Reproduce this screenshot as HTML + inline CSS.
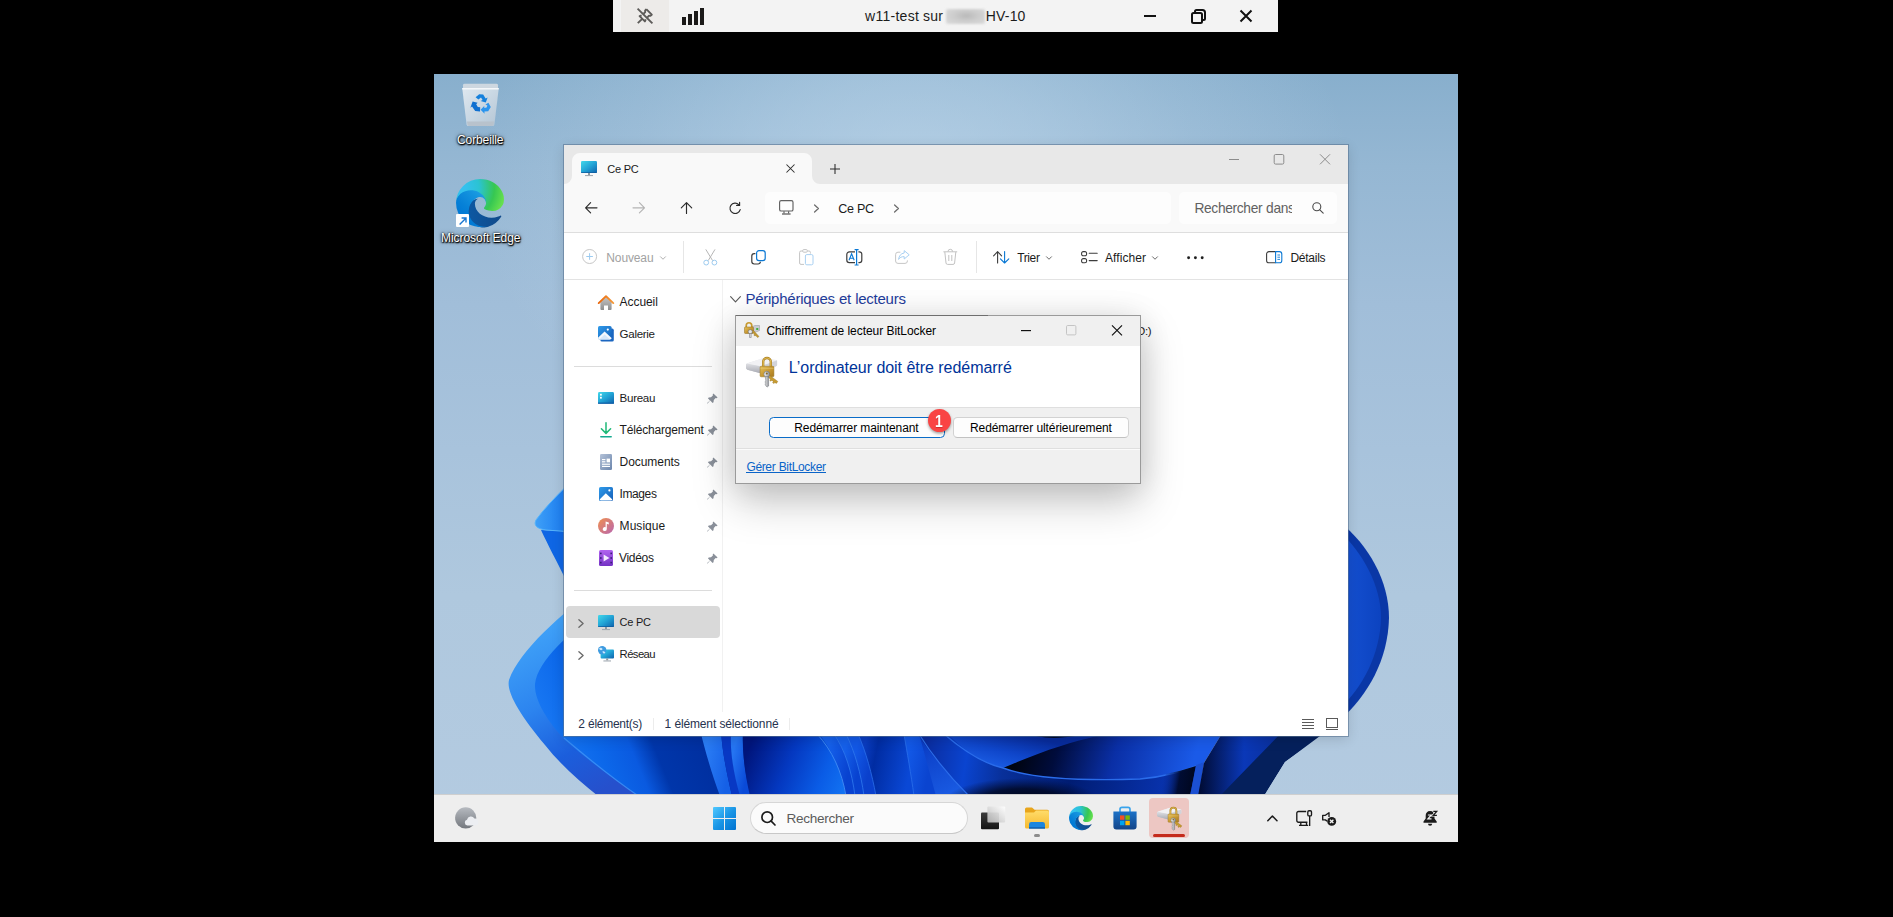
<!DOCTYPE html>
<html lang="fr">
<head>
<meta charset="utf-8">
<title>w11-test</title>
<style>
*{box-sizing:border-box;margin:0;padding:0}
html,body{width:1893px;height:917px;overflow:hidden;background:#000}
body{position:relative;font-family:"Liberation Sans",sans-serif;font-size:12px;color:#1a1a1a}
.abs{position:absolute}
.t{position:absolute;white-space:nowrap;line-height:1}
svg{position:absolute;overflow:visible}
#cbar{left:613px;top:0;width:665px;height:32px;background:#f3f3f3}
#cbar .pin{left:8px;top:0;width:48px;height:32px;background:#edebe9}
#desk{left:434px;top:74px;width:1024px;height:768px;overflow:hidden;background:radial-gradient(ellipse 440px 300px at 480px 110px,rgba(200,222,240,.62) 0%,rgba(200,222,240,.42) 35%,rgba(200,222,240,.2) 65%,rgba(200,222,240,0) 100%),linear-gradient(180deg,rgb(136,175,205) 0%,rgb(149,183,211) 12%,rgb(161,190,217) 30%,rgb(168,195,220) 49%,rgb(175,200,222) 68%,rgb(180,203,225) 100%)}
#in{left:-434px;top:-74px;width:1893px;height:917px}
#in svg#wall{left:434px;top:74px}
.sh{text-shadow:0 1px 2px rgba(0,0,0,.95),0 0 3px rgba(0,0,0,.7),1px 1px 1px rgba(0,0,0,.8)}
/* explorer */
#exp{left:564px;top:145px;width:784px;height:591px;background:#fff;box-shadow:0 0 0 1px rgba(90,116,146,.6),0 3px 12px rgba(0,0,0,.14)}
/* dialog */
#dlg{left:735px;top:315px;width:406px;height:169px;background:#f0f0f0;border:1px solid #9a9a9a;box-shadow:0 18px 40px rgba(0,0,0,.21),0 3px 30px rgba(0,0,0,.11)}
#taskbar{left:434px;top:794px;width:1024px;height:48px;background:#eeeeee;border-top:1px solid #cfcfcf}

</style>
</head>
<body>
<div id="cbar" class="abs">
  <div class="pin abs"></div>
  <svg style="left:24px;top:8px" width="16" height="16" viewBox="0 0 16 16" fill="none" stroke="#5d5b59" stroke-width="1.9" stroke-linecap="butt" stroke-linejoin="round">
    <path d="M0.6 0.6 L15.4 15.4"/>
    <path d="M9.3 1.2 L14.8 6.7 L13.2 7.9 L12 7.7 L10.2 9.6"/>
    <path d="M6.5 5.8 L8.2 4 L8.1 2.6 L9.3 1.2"/>
    <path d="M4.6 7.3 L2.6 8.1 L7.9 13.4 L8.8 11.4"/>
    <path d="M5.2 10.8 L0.8 15.2"/>
  </svg>
  <svg style="left:69px;top:8px" width="22" height="17" viewBox="0 0 22 17" fill="#1b1a19">
    <rect x="0" y="9" width="4" height="8"/><rect x="6" y="6" width="4" height="11"/><rect x="12" y="3" width="4" height="14"/><rect x="18" y="0" width="4" height="17"/>
  </svg>
  <div class="abs" style="left:333px;top:9px;width:39px;height:15px;background:radial-gradient(ellipse at 52% 45%,#b9b9b9 0%,#cdcdcd 45%,#dcdcdc 100%);border-radius:2px;filter:blur(1.1px)"></div>
  <svg style="left:531px;top:8px" width="110" height="16" viewBox="0 0 110 16" fill="none" stroke="#111" stroke-width="2">
    <path d="M0 8 H12"/>
    <rect x="48" y="5" width="10" height="10" rx="1.5"/>
    <path d="M51 4.6 V3.5 A1.5 1.5 0 0 1 52.5 2 H58.5 A2.5 2.5 0 0 1 61 4.5 V10.5 A1.5 1.5 0 0 1 59.5 12 H58.4"/>
    <path d="M96.5 2.5 L107.5 13.5 M107.5 2.5 L96.5 13.5"/>
  </svg>
</div>


<span class="t" id="t0" style="left:865.00px;top:8.70px;font-size:14px;color:#1c1c1c;letter-spacing:0.278px;word-spacing:-0.278px;">w11-test sur</span>
<span class="t" id="t1" style="left:985.80px;top:8.70px;font-size:14px;color:#1c1c1c;letter-spacing:0.170px;word-spacing:-0.170px;">HV-10</span>
<div id="desk" class="abs"><div id="in" class="abs">
<svg id="wall" style="left:434px;top:74px" width="1024" height="768" viewBox="434 74 1024 768">
  <defs>
    <linearGradient id="wg1" x1="0" y1="0" x2="1" y2="0"><stop offset="0" stop-color="#3fa0f7"/><stop offset=".45" stop-color="#1c7df0"/><stop offset="1" stop-color="#0a5fe0"/></linearGradient>
    <linearGradient id="wg2" gradientUnits="userSpaceOnUse" x1="515" y1="640" x2="600" y2="792"><stop offset="0" stop-color="#40a2f8"/><stop offset=".4" stop-color="#2c84ef"/><stop offset=".72" stop-color="#1b5edc"/><stop offset="1" stop-color="#2650cc"/></linearGradient>
    <linearGradient id="wg3" gradientUnits="userSpaceOnUse" x1="560" y1="782" x2="705" y2="722"><stop offset="0" stop-color="#1a7af4"/><stop offset=".3" stop-color="#0c68ea"/><stop offset=".5" stop-color="#0a5ae0"/><stop offset=".64" stop-color="#0036aa"/><stop offset="1" stop-color="#002e9e"/></linearGradient>
    <linearGradient id="wg4" gradientUnits="userSpaceOnUse" x1="748" y1="750" x2="845" y2="790"><stop offset="0" stop-color="#00157c"/><stop offset=".4" stop-color="#0438c0"/><stop offset=".75" stop-color="#0a5ce6"/><stop offset="1" stop-color="#1272f2"/></linearGradient>
    <linearGradient id="wg5" gradientUnits="userSpaceOnUse" x1="862" y1="760" x2="910" y2="770"><stop offset="0" stop-color="#0a3cc0"/><stop offset=".25" stop-color="#002ca2"/><stop offset="1" stop-color="#0a48d6"/></linearGradient>
    <linearGradient id="wg6" gradientUnits="userSpaceOnUse" x1="1010" y1="732" x2="1000" y2="772"><stop offset="0" stop-color="#082c9c"/><stop offset=".5" stop-color="#0f46ca"/><stop offset="1" stop-color="#1c60e8"/></linearGradient>
    <linearGradient id="wg7" x1="0" y1="0" x2="1" y2=".35"><stop offset="0" stop-color="#000618"/><stop offset=".35" stop-color="#001a70"/><stop offset="1" stop-color="#0a44cc"/></linearGradient>
    <linearGradient id="wg8" x1="0" y1="0" x2="1" y2="0"><stop offset="0" stop-color="#000a30"/><stop offset=".5" stop-color="#0a38b8"/><stop offset="1" stop-color="#0a2c90"/></linearGradient>
    <linearGradient id="wg9" x1="0" y1="0" x2="0" y2="1"><stop offset="0" stop-color="#0a36b8"/><stop offset=".6" stop-color="#1555e0"/><stop offset="1" stop-color="#1a5eea"/></linearGradient>
    <linearGradient id="wgB" gradientUnits="userSpaceOnUse" x1="1020" y1="742" x2="1185" y2="790"><stop offset="0" stop-color="#00040f"/><stop offset=".22" stop-color="#000c3c"/><stop offset=".55" stop-color="#0a2fa6"/><stop offset="1" stop-color="#1a5ae8"/></linearGradient>
    <linearGradient id="wn1" gradientUnits="userSpaceOnUse" x1="704" y1="760" x2="730" y2="765"><stop offset="0" stop-color="#2a7cf4"/><stop offset="1" stop-color="#1560e6"/></linearGradient>
    <linearGradient id="wn2" gradientUnits="userSpaceOnUse" x1="731" y1="760" x2="750" y2="765"><stop offset="0" stop-color="#2575f2"/><stop offset="1" stop-color="#0a4ad8"/></linearGradient>
    <linearGradient id="wf1" gradientUnits="userSpaceOnUse" x1="826" y1="760" x2="850" y2="766"><stop offset="0" stop-color="#1560ea"/><stop offset="1" stop-color="#0842d0"/></linearGradient>
    <linearGradient id="wf2" gradientUnits="userSpaceOnUse" x1="842" y1="760" x2="860" y2="765"><stop offset="0" stop-color="#1560ea"/><stop offset="1" stop-color="#0842d0"/></linearGradient>
    <linearGradient id="wf3" gradientUnits="userSpaceOnUse" x1="853" y1="760" x2="871" y2="765"><stop offset="0" stop-color="#1258e6"/><stop offset="1" stop-color="#0a40cc"/></linearGradient>
    <linearGradient id="wf5" gradientUnits="userSpaceOnUse" x1="907" y1="760" x2="930" y2="765"><stop offset="0" stop-color="#1258e6"/><stop offset="1" stop-color="#0a44d0"/></linearGradient>
    <radialGradient id="wgS"><stop offset="0" stop-color="#00030c" stop-opacity=".96"/><stop offset=".55" stop-color="#00061c" stop-opacity=".8"/><stop offset="1" stop-color="#000a30" stop-opacity="0"/></radialGradient>
    <linearGradient id="wgC" gradientUnits="userSpaceOnUse" x1="925" y1="745" x2="1190" y2="790"><stop offset="0" stop-color="#0a2c9e"/><stop offset=".16" stop-color="#0a44d0"/><stop offset=".3" stop-color="#08309a"/><stop offset=".55" stop-color="#001c72"/><stop offset="1" stop-color="#0a38bc"/></linearGradient>
    <linearGradient id="wgD" gradientUnits="userSpaceOnUse" x1="920" y1="740" x2="960" y2="790"><stop offset="0" stop-color="#001e86"/><stop offset="1" stop-color="#0030a8"/></linearGradient>
    <linearGradient id="wgE" gradientUnits="userSpaceOnUse" x1="925" y1="740" x2="955" y2="796"><stop offset="0" stop-color="#0a3cc4"/><stop offset="1" stop-color="#1a5ce4"/></linearGradient>
    <linearGradient id="wgW" gradientUnits="userSpaceOnUse" x1="1160" y1="780" x2="1194" y2="786"><stop offset="0" stop-color="#0a36b8" stop-opacity="0"/><stop offset=".55" stop-color="#000a2c" stop-opacity=".95"/><stop offset="1" stop-color="#00071e"/></linearGradient>
    <linearGradient id="wgR" x1="0" y1="0" x2="1" y2="0"><stop offset="0" stop-color="#1652d4"/><stop offset="1" stop-color="#0c43c0"/></linearGradient>
  </defs>
  <clipPath id="bloomclip"><path d="M500 430 L1400 430 L1400 700 L1348 713 L1322 736 L1285 762 L1264 796 L500 796 Z"/></clipPath>
  <g clip-path="url(#bloomclip)">
  <!-- upper-left petal -->
  <path d="M600 452 C582 472 550 500 536 520 C533 526 538 529 546 530 L600 534 Z" fill="url(#wg1)"/>
  <path d="M541 530 C548 545 556 560 566 580 L600 600 L600 533 Z" fill="#0f66e4"/>
  <path d="M600 452 C582 472 550 500 536 520 C533 526 538 529 546 530 L600 534" fill="none" stroke="#55b4fb" stroke-width="1"/>
  <!-- lower-left big petal: outer band -->
  <path d="M600 585 C560 615 520 650 509 680 C506 692 520 715 545 745 C560 764 580 782 598 796 L1000 796 L1000 700 L600 700 Z" fill="url(#wg2)"/>
  <!-- inner -->
  <path d="M600 612 C570 632 538 660 535 684 C534 700 548 722 566 741 C590 762 615 780 638 796 L760 796 L760 700 L600 700 Z" fill="url(#wg3)"/>
  <path d="M564 738 C590 760 615 780 637 795" fill="none" stroke="#4a98f6" stroke-width="1.2" opacity=".7"/>
  <!-- narrow petals -->
  <path d="M700 730 C705 750 712 775 720 796 L732 796 C726 770 722 750 721 730 Z" fill="url(#wn1)"/>
  <path d="M721 730 C722 750 726 770 732 796 L741 796 C733 770 730 750 731 730 Z" fill="#0838c4"/>
  <path d="M731 734 C730 750 733 772 740 796 L751 796 C745 775 742 752 743 734 Z" fill="url(#wn2)"/>
  <!-- deep region -->
  <path d="M742 730 L830 730 L850 796 L750 796 C745 775 742 752 743 730 Z" fill="url(#wg4)"/>
  <!-- fan of narrow rims -->
  <path d="M816 730 C832 748 842 772 846 796 L1000 796 L1000 730 Z" fill="url(#wf1)"/>
  <path d="M817 734 C832 750 842 772 846 796" fill="none" stroke="#3c86f2" stroke-width="1"/>
  <path d="M833 730 C845 750 852 772 855 796 L1000 796 L1000 730 Z" fill="url(#wf2)"/>
  <path d="M834 734 C845 750 852 772 855 796" fill="none" stroke="#2f78ee" stroke-width=".8"/>
  <path d="M845 730 C855 752 861 774 864 796 L1000 796 L1000 730 Z" fill="url(#wf3)"/>
  <path d="M846 734 C855 752 861 774 864 796" fill="none" stroke="#2f78ee" stroke-width=".8"/>
  <path d="M857 730 C866 752 872 774 876 796 L1000 796 L1000 730 Z" fill="url(#wg5)"/>
  <path d="M858 734 C866 752 872 774 876 796" fill="none" stroke="#2a6fea" stroke-width=".8"/>
  <path d="M903 730 C907 752 911 774 914 796 L1000 796 L1000 730 Z" fill="url(#wf5)"/>
  <path d="M904 734 C907 752 911 774 914 796" fill="none" stroke="#2a6fea" stroke-width=".8"/>
  <!-- wedge r6..rim7 -->
  <path d="M918 730 C924 752 930 774 936 796 L1000 796 L1000 730 Z" fill="url(#wgE)"/>
  <!-- region C -->
  <path d="M916 730 C925 748 940 765 969 796 L1198 796 L1204 763 L1204 730 Z" fill="url(#wgC)"/>
  <ellipse cx="1022" cy="802" rx="78" ry="24" fill="url(#wgS)"/>
  <path d="M919 734 C930 752 945 772 969 796" fill="none" stroke="#2a6cea" stroke-width="1.2"/>
  <!-- petal A -->
  <path d="M944 730 C965 752 985 764 1003 768 L1100 735 L1110 730 Z" fill="url(#wg6)"/>
  <path d="M1036 736 C1050 739 1062 738 1075 736 Z" fill="#000a28"/>
  <!-- petal B -->
  <path d="M1003 768 C1040 752 1070 742 1098 736 L1110 730 L1224 730 L1204 763 C1185 771 1165 777 1140 779 C1080 781 1030 778 1003 768 Z" fill="url(#wgB)"/>
  <path d="M944 734 C965 752 985 764 1003 768 C1030 778 1080 781 1140 779 C1165 777 1185 771 1204 763" fill="none" stroke="#2a6cea" stroke-width="1.4"/>
  <path d="M1196 766 C1186 769 1176 772 1166 774 L1156 796 L1190 796 Z" fill="url(#wgW)"/>
  <path d="M1204 762 L1196 765 L1190 796 L1199 796 Z" fill="#1b50d2"/>
  <path d="M1224 730 L1204 763 L1198 796 L1224 796 L1290 730 Z" fill="url(#wg8)"/>
  <!-- right outer -->
  <path d="M1284 730 L1220 796 L1264 796 L1285 762 L1324 733 L1348 713 L1340 700 Z" fill="#05205c"/>
  <!-- right side petal -->
  <path d="M1340 522 C1368 545 1389 580 1389 618 C1388 660 1368 695 1340 720 Z" fill="#0a37a6"/>
  <path d="M1340 532 C1362 552 1381 585 1381 618 C1380 655 1362 688 1340 708 Z" fill="url(#wgR)"/>
  </g>
</svg>
<!-- recycle bin -->
<svg style="left:461px;top:83px" width="39" height="44" viewBox="0 0 39 44">
  <defs>
    <linearGradient id="gbin" x1="0" y1="0" x2="1" y2="1"><stop offset="0" stop-color="#e2eaf1"/><stop offset=".5" stop-color="#ccd9e4"/><stop offset="1" stop-color="#b6c6d5"/></linearGradient>
  </defs>
  <path d="M2 2.2 Q2 0.8 3.6 0.8 H35.4 Q37 0.8 37 2.2 V5.6 H2 Z" fill="#cdd7e0"/>
  <path d="M1.2 5 H37.8 L33.4 41.4 Q33.2 43 31.6 43 H7.4 Q5.8 43 5.6 41.4 Z" fill="url(#gbin)" opacity=".96"/>
  <path d="M6 38.4 H33 L32.6 41.6 Q32.4 43 31 43 H8 Q6.6 43 6.4 41.6 Z" fill="#b8c2cc"/>
  <path d="M1.2 5 H37.8 L37.6 6.6 H1.4 Z" fill="#f4f7fa"/>
  <g fill="#1580dc">
    <path d="M14.6 14.2 L18.2 11.2 L22.2 11.6 L24.6 15.4 L26.6 14.4 L24.8 19.6 L19.6 18 L21.6 17 L20 14.4 L17.4 16.6 Z"/>
    <path d="M11.6 18.6 L16.6 19.8 L15.2 21.2 L16.8 24 L19.2 24.2 L19 28.4 L14.2 28 L11 23.6 L9.4 24.8 Z" fill="#0f6fd0"/>
    <path d="M27.4 19.8 L29.8 24 L27.2 28.2 L23.4 28.6 L23.6 30.8 L19.6 26.8 L23.2 23 L23.4 25 L25.6 24.6 L26.4 22.4 L24.4 21.6 Z" fill="#2a94ee"/>
  </g>
</svg>
<!-- edge icon 48 -->
<svg style="left:456px;top:179px" width="48" height="48" viewBox="0 0 256 256">
  <defs>
    <linearGradient id="ea" gradientUnits="userSpaceOnUse" x1="58.7" y1="177" x2="237" y2="177"><stop offset="0" stop-color="#0c59a4"/><stop offset="1" stop-color="#114a8b"/></linearGradient>
    <linearGradient id="ec" gradientUnits="userSpaceOnUse" x1="157.3" y1="99.9" x2="46" y2="221.2"><stop offset="0" stop-color="#1b9de2"/><stop offset=".16" stop-color="#1595df"/><stop offset=".67" stop-color="#0680d7"/><stop offset="1" stop-color="#0078d4"/></linearGradient>
    <radialGradient id="ee" gradientUnits="userSpaceOnUse" cx="25.9" cy="47.4" r="235" gradientTransform="matrix(1 0 0 1 0 0)"><stop offset="0" stop-color="#35c1f1"/><stop offset=".11" stop-color="#34c1ed"/><stop offset=".28" stop-color="#2fc2df"/><stop offset=".42" stop-color="#2bc3d2"/><stop offset=".76" stop-color="#36c752"/><stop offset="1" stop-color="#66e04e"/></radialGradient>
    <g id="edgelogo">
      <path d="M235.7 195.5a93.7 93.7 0 0 1-10.6 4.7 101.9 101.9 0 0 1-35.9 6.4c-47.3 0-88.500-32.500-88.500-74.300a31.500 31.500 0 0 1 16.400-27.300c-42.800 1.800-53.800 46.400-53.800 72.500 0 74 68.100 81.400 82.800 81.400 7.900 0 19.800-2.300 27-4.600l1.300-.4a128.300 128.300 0 0 0 66.600-52.800 4 4 0 0 0-5.300-5.600Z" fill="url(#ea)"/>
      <path d="M105.700 241.400a79.200 79.200 0 0 1-22.700-21.300 80.700 80.700 0 0 1 29.500-120c3.200-1.500 8.500-4.100 15.600-4a32.400 32.400 0 0 1 25.700 13 31.900 31.900 0 0 1 6.300 18.700c0-.2 24.500-79.600-80-79.600-43.900 0-80 41.600-80 78.200a130.200 130.200 0 0 0 12.100 56 128 128 0 0 0 156.400 67 75.500 75.500 0 0 1-62.800-8Z" fill="url(#ec)"/>
      <path d="M152.300 148.900c-.9 1-3.400 2.500-3.400 5.600 0 2.600 1.700 5.200 4.800 7.300 14.300 10 41.400 8.600 41.500 8.600a59.600 59.600 0 0 0 30.300-8.300 61.400 61.400 0 0 0 30.400-52.900c.3-22.400-8-37.300-11.300-43.900C223.500 23.900 177.700 0 128 0A128 128 0 0 0 0 126.200c.5-36.500 36.800-66 80-66 3.500 0 23.500.3 42 10a72.600 72.600 0 0 1 30.900 29.300c6.100 10.600 7.200 24.100 7.200 29.500 0 5.300-2.700 13.300-7.800 19.900Z" fill="url(#ee)"/>
    </g>
  </defs>
  <use href="#edgelogo"/>
</svg>
<!-- shortcut overlay -->
<div class="abs" style="left:456px;top:214px;width:13px;height:13px;background:#fff;border-radius:1px"></div>
<svg style="left:458.5px;top:216.5px" width="8" height="8" viewBox="0 0 8 8" fill="none" stroke="#1a78d2" stroke-width="1.4"><path d="M0.6 7.4 L6.6 1.4 M2.6 1 H7 V5.4"/></svg>

<span class="t" id="t2" style="left:457.00px;top:134.00px;font-size:12px;color:#fff;letter-spacing:-0.107px;word-spacing:0.107px;text-shadow:0 0 2px rgba(0,0,0,.9),0 1px 2px rgba(0,0,0,1),1px 1px 1px rgba(0,0,0,.9),0 0 4px rgba(0,0,0,.5)">Corbeille</span>
<span class="t" id="t3" style="left:441.00px;top:232.00px;font-size:12px;color:#fff;letter-spacing:-0.046px;word-spacing:0.046px;text-shadow:0 0 2px rgba(0,0,0,.9),0 1px 2px rgba(0,0,0,1),1px 1px 1px rgba(0,0,0,.9),0 0 4px rgba(0,0,0,.5)">Microsoft Edge</span>
<svg width="0" height="0" style="left:0;top:0">
  <defs>
    <linearGradient id="gpc" x1="0" y1="0" x2="1" y2="1"><stop offset="0" stop-color="#42d8ea"/><stop offset=".5" stop-color="#22a4d6"/><stop offset="1" stop-color="#0f62ac"/></linearGradient>
    <linearGradient id="ggray" x1="0" y1="0" x2="0" y2="1"><stop offset="0" stop-color="#c4c4c4"/><stop offset="1" stop-color="#8e8e8e"/></linearGradient>
    <linearGradient id="groof" x1="0" y1="0" x2="1" y2="0"><stop offset="0" stop-color="#e8650a"/><stop offset="1" stop-color="#f59a3a"/></linearGradient>
    <linearGradient id="gimg" x1="0" y1="0" x2="1" y2="1"><stop offset="0" stop-color="#2f9bea"/><stop offset="1" stop-color="#155fb8"/></linearGradient>
    <linearGradient id="gdoc" x1="0" y1="0" x2="1" y2="1"><stop offset="0" stop-color="#b4c2d8"/><stop offset="1" stop-color="#6c86ac"/></linearGradient>
    <linearGradient id="gmus" x1="0" y1="0" x2="1" y2="1"><stop offset="0" stop-color="#f0904e"/><stop offset="1" stop-color="#b866b0"/></linearGradient>
    <linearGradient id="gvid" x1="0" y1="0" x2="0" y2="1"><stop offset="0" stop-color="#b264f0"/><stop offset="1" stop-color="#7432c4"/></linearGradient>
    <linearGradient id="gdl" x1="0" y1="0" x2="0" y2="1"><stop offset="0" stop-color="#2cc66e"/><stop offset="1" stop-color="#12a894"/></linearGradient>
    <g id="icpc"><rect x="0" y="0" width="16" height="12" rx="1.2" fill="url(#gpc)"/><rect x="0" y="11" width="16" height="1" fill="#0d5a9c" opacity=".7"/><rect x="7" y="12" width="2" height="2.2" fill="#8e979f"/><rect x="4" y="14" width="8" height="1.1" fill="#a3abb3"/></g>
    <g id="icpin"><path d="M6.4 0.4 L10.6 4.6 L9.5 5.2 L8.6 5.0 L6.8 6.9 L6.5 9.2 L5.6 10 L3.2 7.6 L0.6 10.4 L0.2 10.4 L0.2 10 L3 7.4 L0.9 5.3 L1.8 4.5 L4 4.2 L5.9 2.4 L5.7 1.4 Z" fill="#8a909a"/></g>
    <g id="icchev"><path d="M0.6 0.6 L4.6 4.3 L0.6 8" fill="none" stroke="#6b6b6b" stroke-width="1.3" stroke-linecap="round" stroke-linejoin="round"/></g>
    <g id="icdd"><path d="M0.5 0.5 L3 3 L5.5 0.5" fill="none" stroke-width="1" stroke-linecap="round" stroke-linejoin="round"/></g>
  </defs>
</svg>
<div id="exp" class="abs"></div>
<div class="abs" style="left:564px;top:145px;width:784px;height:39px;background:#e8e8e8"></div>
<div class="abs" style="left:564px;top:184px;width:784px;height:48px;background:#f9f9f9"></div>
<div class="abs" style="left:564px;top:232px;width:784px;height:1px;background:#dedede"></div>
<div class="abs" style="left:564px;top:279px;width:784px;height:1px;background:#e3e3e3"></div>
<!-- tab -->
<svg style="left:564px;top:153px" width="256" height="31" viewBox="0 0 256 31"><path d="M0 31 A8 8 0 0 0 8 23 V8 A8 8 0 0 1 16 0 H240 A8 8 0 0 1 248 8 V23 A8 8 0 0 0 256 31 Z" fill="#f9f9f9"/></svg>
<svg style="left:581px;top:161px" width="16" height="16" viewBox="0 0 16 16"><use href="#icpc"/></svg>
<svg style="left:786px;top:163.5px" width="9" height="9" viewBox="0 0 9 9"><path d="M0.5 0.5 L8.5 8.5 M8.5 0.5 L0.5 8.5" stroke="#2a2a2a" stroke-width="1.05" fill="none"/></svg>
<svg style="left:829.5px;top:163.5px" width="10" height="10" viewBox="0 0 10 10"><path d="M5 0 V10 M0 5 H10" stroke="#2a2a2a" stroke-width="1.05" fill="none"/></svg>
<!-- caption buttons (inactive) -->
<svg style="left:1229px;top:154px" width="102" height="11" viewBox="0 0 102 11" fill="none" stroke="#8c8c8c" stroke-width="1"><path d="M0 5.5 H10"/><rect x="45.2" y="0.5" width="9.6" height="9.6" rx="1.4"/><path d="M91 0.3 L101 10.3 M101 0.3 L91 10.3"/></svg>
<!-- nav arrows -->
<svg style="left:585px;top:202px" width="160" height="12" viewBox="0 0 160 12" fill="none" stroke-width="1.15" stroke-linecap="round" stroke-linejoin="round">
  <path d="M12 5.8 H0.7 M5.6 0.7 L0.6 5.8 L5.6 10.9" stroke="#2b2b2b"/>
  <path d="M48 5.8 H59.4 M54.4 0.7 L59.5 5.8 L54.4 10.9" stroke="#b4b4b4"/>
  <path d="M101.5 11.5 V0.8 M96.3 5.8 L101.5 0.6 L106.7 5.8" stroke="#2b2b2b"/>
  <path d="M153.8 2.6 A5.2 5.2 0 1 0 155.2 7.6 M154.6 0.4 V3.4 H151.6" stroke="#2b2b2b"/>
</svg>
<!-- address box -->
<div class="abs" style="left:765px;top:192px;width:406px;height:32px;background:#fdfdfd;border-radius:5px"></div>
<svg style="left:779px;top:200px" width="15" height="15" viewBox="0 0 15 15" fill="none" stroke="#616161" stroke-width="1.15"><rect x="0.6" y="0.6" width="13.4" height="10.4" rx="1.6"/><path d="M5 11.2 V13.4 M9.6 11.2 V13.4" /><path d="M3 14 H11.6" stroke-width="1.3"/></svg>
<svg style="left:813.5px;top:204px" width="5" height="9" viewBox="0 0 5.2 8.6"><use href="#icchev" stroke="#444"/></svg>
<svg style="left:893.5px;top:204px" width="5" height="9" viewBox="0 0 5.2 8.6"><use href="#icchev"/></svg>
<!-- search box -->
<div class="abs" style="left:1179px;top:192px;width:158px;height:32px;background:#fdfdfd;border-radius:5px"></div>
<svg style="left:1312px;top:202px" width="12" height="12" viewBox="0 0 12 12" fill="none" stroke="#4a4a4a" stroke-width="1.1" stroke-linecap="round"><circle cx="4.8" cy="4.8" r="4"/><path d="M7.8 7.8 L11.2 11.2"/></svg>
<!-- toolbar -->
<svg style="left:581.5px;top:249px" width="16" height="16" viewBox="0 0 16 16" fill="none"><circle cx="7.6" cy="7.5" r="7" stroke="#c6c6c6" stroke-width="1"/><path d="M7.6 4.2 V10.8 M4.3 7.5 H10.9" stroke="#9ccbf0" stroke-width="1"/></svg>
<svg style="left:659.5px;top:255.5px" width="6" height="4" viewBox="0 0 6 3.5"><use href="#icdd" stroke="#b0b0b0"/></svg>
<div class="abs" style="left:683px;top:241px;width:1px;height:32px;background:#e6e6e6"></div>
<svg style="left:703px;top:249px" width="15" height="17" viewBox="0 0 15 17" fill="none" stroke-width="1"><path d="M2.8 0.4 L9.6 11.6 M12 0.4 L5.2 11.6" stroke="#b6b6b6"/><circle cx="3.2" cy="13.6" r="2.4" stroke="#9ccbf0"/><circle cx="11.4" cy="13.6" r="2.4" stroke="#9ccbf0"/></svg>
<svg style="left:750.5px;top:249.5px" width="15" height="15" viewBox="0 0 15 15" fill="none" stroke-width="1.2"><path d="M4.4 3.6 H3.2 A2.4 2.4 0 0 0 0.8 6 V11.6 A2.4 2.4 0 0 0 3.2 14 H7 A2.4 2.4 0 0 0 9.4 11.8" stroke="#3c3c3c"/><rect x="5.6" y="0.7" width="8.6" height="10" rx="2.4" stroke="#0a78d4"/></svg>
<svg style="left:799px;top:249px" width="15" height="17" viewBox="0 0 15 17" fill="none" stroke-width="1"><path d="M5 15.4 H2 A1.4 1.4 0 0 1 0.6 14 V3.4 A1.4 1.4 0 0 1 2 2 H3.4 M8.6 2 H10 A1.4 1.4 0 0 1 11.4 3.4 V4.6" stroke="#c4c4c4"/><rect x="3.6" y="0.6" width="4.8" height="2.6" rx="1.2" stroke="#c4c4c4"/><rect x="6.4" y="5.6" width="7.6" height="10.2" rx="1.4" stroke="#a8d0f2"/></svg>
<svg style="left:846px;top:249px" width="17" height="17" viewBox="0 0 17 17" fill="none" stroke-width="1.2"><path d="M9 2.8 H3.4 A2.6 2.6 0 0 0 0.8 5.4 V11 A2.6 2.6 0 0 0 3.4 13.6 H9 M12.4 2.8 H13.4 A2.4 2.4 0 0 1 15.8 5.2 V11.2 A2.4 2.4 0 0 1 13.4 13.6 H12.4" stroke="#3c3c3c"/><path d="M10.6 0.6 V16 M8.6 0.6 H12.6 M8.6 16 H12.6" stroke="#0a78d4"/><path d="M3 11.2 L5.6 4.8 L8.2 11.2 M3.9 9.2 H7.3" stroke="#0a78d4" stroke-width="1.1"/></svg>
<svg style="left:895px;top:250px" width="15" height="14" viewBox="0 0 15 14" fill="none" stroke-width="1"><path d="M5.4 2.2 H3 A2.4 2.4 0 0 0 0.6 4.6 V11 A2.4 2.4 0 0 0 3 13.4 H10 A2.4 2.4 0 0 0 12.4 11 V10.4" stroke="#c6c6c6"/><path d="M9.2 0.6 L14.2 4.8 L9.2 9 V6.6 C6.6 6.6 4.8 7.4 3.6 9.4 C4 6 5.8 3.4 9.2 3 Z" stroke="#a8d0f2" stroke-linejoin="round"/></svg>
<svg style="left:943px;top:249px" width="15" height="16" viewBox="0 0 15 16" fill="none" stroke="#c2c2c2" stroke-width="1"><path d="M0.4 2.8 H14.2 M5 2.6 A2.3 2.3 0 0 1 9.6 2.6 M1.8 3 L3 14 A1.6 1.6 0 0 0 4.6 15.4 H10 A1.6 1.6 0 0 0 11.6 14 L12.8 3 M5.8 6 V12 M8.8 6 V12"/></svg>
<div class="abs" style="left:976px;top:241px;width:1px;height:32px;background:#e6e6e6"></div>
<svg style="left:993px;top:251px" width="17" height="13" viewBox="0 0 17 13" fill="none" stroke-width="1.1" stroke-linecap="round" stroke-linejoin="round"><path d="M4.6 12 V0.8 M0.6 4.8 L4.6 0.7 L8.6 4.8" stroke="#3c3c3c"/><path d="M11.6 0.6 V11.8 M7.4 7.8 L11.6 12 L15.8 7.8" stroke="#0a78d4"/></svg>
<svg style="left:1046px;top:255.5px" width="6" height="4" viewBox="0 0 6 3.5"><use href="#icdd" stroke="#6a6a6a"/></svg>
<svg style="left:1080.5px;top:251px" width="17" height="13" viewBox="0 0 17 13" fill="none" stroke="#3c3c3c" stroke-width="1.1"><rect x="0.6" y="0.6" width="5" height="4.2" rx="1.6"/><rect x="0.6" y="7.6" width="5" height="4.2" rx="1.6"/><path d="M8.2 2.2 H16.2 M8.2 9.6 H16.2" stroke-linecap="round"/></svg>
<svg style="left:1152px;top:255.5px" width="6" height="4" viewBox="0 0 6 3.5"><use href="#icdd" stroke="#6a6a6a"/></svg>
<svg style="left:1186.5px;top:256px" width="17" height="4" viewBox="0 0 17 4" fill="#1f1f1f"><circle cx="1.6" cy="1.8" r="1.45"/><circle cx="8.4" cy="1.8" r="1.45"/><circle cx="15.2" cy="1.8" r="1.45"/></svg>
<svg style="left:1266px;top:251px" width="17" height="13" viewBox="0 0 17 13" fill="none" stroke-width="1.1"><path d="M9.6 0.6 H3 A2.4 2.4 0 0 0 0.6 3 V9.4 A2.4 2.4 0 0 0 3 11.8 H9.6" stroke="#3c3c3c"/><path d="M9.6 0.6 H13.4 A2.4 2.4 0 0 1 15.8 3 V9.4 A2.4 2.4 0 0 1 13.4 11.8 H9.6 Z" stroke="#0a78d4"/><path d="M11.4 4 H14 M11.4 6.2 H14 M11.4 8.4 H14" stroke="#0a78d4" stroke-width=".9"/></svg>
<!-- nav pane -->
<div class="abs" style="left:722px;top:280px;width:1px;height:432px;background:#f1f1f1"></div>
<div class="abs" style="left:574px;top:366px;width:138px;height:1px;background:#dcdcdc"></div>
<div class="abs" style="left:574px;top:590px;width:138px;height:1px;background:#dcdcdc"></div>
<div class="abs" style="left:566px;top:606px;width:154px;height:32px;background:#d9d9d9;border-radius:4px"></div>
<!-- home -->
<svg style="left:598px;top:294.5px" width="16" height="16" viewBox="0 0 16 16"><path d="M2.4 7 L8 2.2 L13.6 7 V14 A1 1 0 0 1 12.6 15 H10 V10.4 H6 V15 H3.4 A1 1 0 0 1 2.4 14 Z" fill="url(#ggray)"/><path d="M0.7 8.1 L8 1.3 L15.3 8.1" fill="none" stroke="url(#groof)" stroke-width="1.9" stroke-linecap="round" stroke-linejoin="round"/></svg>
<!-- gallery -->
<svg style="left:598px;top:325.5px" width="16" height="16" viewBox="0 0 16 16"><rect x="2.4" y="2.6" width="13.4" height="13" rx="1.6" fill="#1b66c0"/><rect x="0" y="0" width="13.6" height="13.4" rx="1.6" fill="url(#gimg)"/><path d="M0 11.8 L6.6 5.4 L13.6 12 V12 A1.4 1.4 0 0 1 12.2 13.4 H1.4 A1.4 1.4 0 0 1 0 12 Z" fill="#fff" opacity=".95"/><path d="M1.2 13.4 L6.6 8.4 L12.2 13.4 Z" fill="#d6e8fa"/><circle cx="9.8" cy="3.6" r="1.1" fill="#fff"/></svg>
<!-- bureau -->
<svg style="left:598px;top:392px" width="16" height="12" viewBox="0 0 16 12"><rect x="0" y="0" width="16" height="11.6" rx="1.4" fill="url(#gpc)"/><rect x="0" y="10.6" width="16" height="1.2" fill="#0e5ca6"/><rect x="2" y="1.8" width="1.8" height="1.8" fill="#fff"/><rect x="2" y="4.8" width="1.8" height="1.8" fill="#fff"/></svg>
<!-- download -->
<svg style="left:600px;top:422px" width="12" height="16" viewBox="0 0 12 16" fill="none" stroke="url(#gdl)" stroke-width="1.5" stroke-linecap="round" stroke-linejoin="round"><path d="M6 0.8 V11.2 M1.4 6.8 L6 11.4 L10.6 6.8" stroke="#1fb978"/><path d="M0.8 14.8 H11.2" stroke="#14aa90"/></svg>
<!-- documents -->
<svg style="left:600px;top:454px" width="12" height="16" viewBox="0 0 12 16"><rect x="0" y="0" width="12" height="16" rx="1.2" fill="url(#gdoc)"/><rect x="2" y="5" width="3.4" height="1.2" fill="#fff"/><rect x="2" y="7.2" width="3.4" height="1.2" fill="#fff"/><rect x="6.6" y="4.6" width="3.4" height="3.8" fill="#fff"/><rect x="2" y="9.6" width="8" height="1.2" fill="#fff"/><rect x="2" y="11.8" width="8" height="1.2" fill="#fff"/></svg>
<!-- images -->
<svg style="left:599px;top:487px" width="14" height="14" viewBox="0 0 14 14"><rect x="0" y="0" width="14" height="14" rx="1.6" fill="url(#gimg)"/><path d="M0.6 12.6 L6.8 6.2 L13.4 12.6 A1.2 1.2 0 0 1 12.4 13.4 H1.6 A1.2 1.2 0 0 1 0.6 12.6 Z" fill="#fff"/><circle cx="10.4" cy="3.4" r="1.1" fill="#fff"/></svg>
<!-- music -->
<svg style="left:598px;top:518px" width="16" height="16" viewBox="0 0 16 16"><circle cx="8" cy="8" r="8" fill="url(#gmus)"/><path d="M7.6 3.4 L10.8 4.6 V6.4 L8.8 5.7 V11 A2 2 0 1 1 7.6 9.2 Z" fill="#fff"/></svg>
<!-- videos -->
<svg style="left:599px;top:550px" width="14" height="16" viewBox="0 0 14 16"><rect x="0" y="0" width="14" height="16" rx="1.6" fill="url(#gvid)"/><path d="M4.6 4.4 L10.4 8 L4.6 11.6 Z" fill="#f3e9ff"/><g fill="#3b1f78"><rect x="1" y="2.6" width="1.6" height="1.6"/><rect x="1" y="7.2" width="1.6" height="1.6"/><rect x="1" y="11.8" width="1.6" height="1.6"/><rect x="11.4" y="2.6" width="1.6" height="1.6"/><rect x="11.4" y="7.2" width="1.6" height="1.6"/><rect x="11.4" y="11.8" width="1.6" height="1.6"/></g></svg>
<!-- ce pc -->
<svg style="left:598px;top:615px" width="16" height="16" viewBox="0 0 16 16"><use href="#icpc"/></svg>
<!-- reseau -->
<svg style="left:598px;top:646px" width="16" height="16" viewBox="0 0 16 16"><rect x="2.6" y="3.4" width="13.4" height="9" rx="1" fill="url(#gpc)"/><rect x="8.2" y="12.4" width="2" height="2" fill="#8e979f"/><rect x="5.4" y="14.4" width="7.6" height="1.1" fill="#a3abb3"/><circle cx="4.2" cy="4.2" r="4.2" fill="#3d9be0"/><path d="M1 2.6 C2.4 1.2 4 1.8 4.6 3.2 C3.6 4.6 2 4.6 1 2.6 Z M4.4 5.4 C5.6 4.8 7 5.6 7.4 6.8 C6.4 8 5 7.6 4.4 5.4 Z" fill="#d8f0ff" opacity=".9"/></svg>
<svg style="left:578px;top:618.5px" width="6" height="9" viewBox="0 0 5.2 8.6"><use href="#icchev"/></svg>
<svg style="left:578px;top:650.5px" width="6" height="9" viewBox="0 0 5.2 8.6"><use href="#icchev"/></svg>
<!-- pins -->
<svg style="left:706.5px;top:393px" width="11" height="11" viewBox="0 0 11 11"><use href="#icpin"/></svg>
<svg style="left:706.5px;top:425px" width="11" height="11" viewBox="0 0 11 11"><use href="#icpin"/></svg>
<svg style="left:706.5px;top:457px" width="11" height="11" viewBox="0 0 11 11"><use href="#icpin"/></svg>
<svg style="left:706.5px;top:489px" width="11" height="11" viewBox="0 0 11 11"><use href="#icpin"/></svg>
<svg style="left:706.5px;top:521px" width="11" height="11" viewBox="0 0 11 11"><use href="#icpin"/></svg>
<svg style="left:706.5px;top:553px" width="11" height="11" viewBox="0 0 11 11"><use href="#icpin"/></svg>
<!-- content header chevron -->
<svg style="left:730px;top:296px" width="11" height="7" viewBox="0 0 11 7" fill="none" stroke="#5a5a5a" stroke-width="1.1" stroke-linecap="round" stroke-linejoin="round"><path d="M0.6 0.6 L5.5 5.8 L10.4 0.6"/></svg>
<!-- status bar -->
<div class="abs" style="left:653px;top:718px;width:1px;height:12px;background:#ececec"></div>
<div class="abs" style="left:789px;top:718px;width:1px;height:12px;background:#ececec"></div>
<svg style="left:1302px;top:718px" width="37" height="13" viewBox="0 0 37 13" fill="none" stroke="#5a5a5a" stroke-width="1"><path d="M0 1.5 H12 M0 4.5 H12 M0 7.5 H12 M0 10.5 H12"/><rect x="24.5" y="0.5" width="11" height="9"/><path d="M24 11.5 H36"/></svg>

<span class="t" id="t4" style="left:607.30px;top:164.00px;font-size:11.03px;color:#1b1b1b;letter-spacing:-0.318px;word-spacing:0.318px;">Ce PC</span>
<span class="t" id="t5" style="left:838.20px;top:202.60px;font-size:12.56px;color:#1b1b1b;letter-spacing:-0.323px;word-spacing:0.323px;">Ce PC</span>
<span class="t" id="t6" style="left:1194.40px;top:201.60px;font-size:13.76px;color:#616161;letter-spacing:-0.317px;word-spacing:0.317px;width:97.6px;overflow:hidden;height:18px;">Rechercher dans</span>
<span class="t" id="t7" style="left:606.30px;top:252.00px;font-size:12px;color:#a2a2a2;letter-spacing:-0.124px;word-spacing:0.124px;">Nouveau</span>
<span class="t" id="t8" style="left:1017.20px;top:252.00px;font-size:12px;color:#1b1b1b;letter-spacing:-0.380px;word-spacing:0.380px;">Trier</span>
<span class="t" id="t9" style="left:1105.00px;top:252.00px;font-size:12px;color:#1b1b1b;letter-spacing:0.076px;word-spacing:-0.076px;">Afficher</span>
<span class="t" id="t10" style="left:1290.40px;top:252.00px;font-size:12px;color:#1b1b1b;letter-spacing:-0.248px;word-spacing:0.248px;">Détails</span>
<span class="t" id="t11" style="left:619.60px;top:296.00px;font-size:12px;color:#1b1b1b;letter-spacing:-0.065px;word-spacing:0.065px;">Accueil</span>
<span class="t" id="t12" style="left:619.60px;top:328.80px;font-size:11.58px;color:#1b1b1b;letter-spacing:-0.321px;word-spacing:0.321px;">Galerie</span>
<span class="t" id="t13" style="left:619.60px;top:391.80px;font-size:11.6px;color:#1b1b1b;letter-spacing:-0.318px;word-spacing:0.318px;">Bureau</span>
<span class="t" id="t14" style="left:619.60px;top:423.80px;font-size:12px;color:#1b1b1b;letter-spacing:-0.194px;word-spacing:0.194px;">Téléchargement</span>
<span class="t" id="t15" style="left:619.60px;top:455.80px;font-size:12px;color:#1b1b1b;letter-spacing:-0.063px;word-spacing:0.063px;">Documents</span>
<span class="t" id="t16" style="left:619.60px;top:487.80px;font-size:12px;color:#1b1b1b;letter-spacing:-0.412px;word-spacing:0.412px;">Images</span>
<span class="t" id="t17" style="left:619.60px;top:519.80px;font-size:12px;color:#1b1b1b;letter-spacing:0.040px;word-spacing:-0.040px;">Musique</span>
<span class="t" id="t18" style="left:619.00px;top:551.80px;font-size:12px;color:#1b1b1b;letter-spacing:-0.297px;word-spacing:0.297px;">Vidéos</span>
<span class="t" id="t19" style="left:619.60px;top:617.00px;font-size:10.99px;color:#1b1b1b;letter-spacing:-0.320px;word-spacing:0.320px;">Ce PC</span>
<span class="t" id="t20" style="left:619.60px;top:648.80px;font-size:11.28px;color:#1b1b1b;letter-spacing:-0.569px;word-spacing:0.569px;">Réseau</span>
<span class="t" id="t21" style="left:745.40px;top:290.80px;font-size:15px;color:#1f3d9c;letter-spacing:-0.243px;word-spacing:0.243px;">Périphériques et lecteurs</span>
<span class="t" id="t22" style="left:1137.00px;top:325.60px;font-size:11.43px;color:#1b1b1b;letter-spacing:-0.317px;word-spacing:0.317px;">D:)</span>
<span class="t" id="t23" style="left:578.30px;top:717.80px;font-size:12px;color:#26324e;letter-spacing:-0.270px;word-spacing:0.270px;">2 élément(s)</span>
<span class="t" id="t24" style="left:664.60px;top:717.80px;font-size:12px;color:#26324e;letter-spacing:-0.153px;word-spacing:0.153px;">1 élément sélectionné</span>
<svg width="0" height="0" style="left:0;top:0">
  <defs>
    <linearGradient id="gdrv" x1="0" y1="0" x2="0" y2="1"><stop offset="0" stop-color="#f2f2f4"/><stop offset="1" stop-color="#b9bcc2"/></linearGradient>
    <linearGradient id="gdrf" x1="0" y1="0" x2="0" y2="1"><stop offset="0" stop-color="#dcdde2"/><stop offset="1" stop-color="#a9abb3"/></linearGradient>
    <linearGradient id="ggold" x1="0" y1="0" x2="1" y2="1"><stop offset="0" stop-color="#e6c25c"/><stop offset=".5" stop-color="#c99a34"/><stop offset="1" stop-color="#a87a1e"/></linearGradient>
    <linearGradient id="gsil" x1="0" y1="0" x2="1" y2="0"><stop offset="0" stop-color="#f4f4f4"/><stop offset="1" stop-color="#8f9298"/></linearGradient>
    <g id="icbl">
      <path d="M0.700 7.500 L16.800 2.200 L30.600 4 Q31.200 4.200 31.200 5 V8.800 Q31.200 9.600 30.400 10 L14.600 17.200 L1.400 13.800 Q0 13.200 0 11.600 V9 Q0 7.900 0.700 7.500 Z" fill="url(#gdrv)"/>
      <path d="M0.700 7.500 L16.800 2.200 L30.800 4.200 L14.600 10.200 Z" fill="#f1f1f4"/>
      <path d="M0.300 8 L14.600 10.400 V17.200 L1.400 13.800 Q0 13.200 0 11.600 V9 Z" fill="url(#gdrf)"/>
      <path d="M14.600 10.400 L31 4.400 V9 Q31 9.600 30.400 10 L14.600 17.200 Z" fill="#d2d3d9"/>
      <path d="M17.200 10.800 V5.800 A3.800 3.800 0 0 1 24.800 5.800 V10.800" fill="none" stroke="#a87c1c" stroke-width="2.300"/>
      <path d="M17.200 10.800 V5.800 A3.800 3.800 0 0 1 24.800 5.800 V10.800" fill="none" stroke="#e2be58" stroke-width="1.100"/>
      <rect x="14.100" y="10.300" width="13.800" height="10.500" rx="1" fill="url(#ggold)" stroke="#94701c" stroke-width=".5"/>
      <path d="M14.400 12.600 H27.600" stroke="#e8cc78" stroke-width=".6" opacity=".8"/>
      <path d="M23 19 L31.800 25.400 L30.400 27.400 L28.800 26.400 L28 27.600 L26.600 26.600 L27.400 25.400 L25.800 24.200 L25 25.200 L23.800 24.400 L24.600 23.200 L21.800 21 Z" fill="#c89c30" stroke="#8e6a1a" stroke-width=".4"/>
      <circle cx="20.800" cy="18.200" r="2.900" fill="url(#gsil)" stroke="#70747a" stroke-width=".6"/>
      <circle cx="20.800" cy="17.400" r="1" fill="#8a6a20"/>
      <path d="M19.300 20.600 H22.600 V30 L21.200 31 L19.800 30 V28.800 L18.800 28.200 L19.800 27.600 V26.600 L18.800 26 L19.800 25.400 Z" fill="url(#gsil)" stroke="#70747a" stroke-width=".5"/>
    </g>
  </defs>
</svg>
<div id="dlg" class="abs"></div>
<div class="abs" style="left:736px;top:316px;width:404px;height:30px;background:#f0f0f0"></div>
<div class="abs" style="left:736px;top:315px;width:252px;height:1px;background:#6e6e6e"></div>
<div class="abs" style="left:736px;top:346px;width:404px;height:61px;background:#fff"></div>
<div class="abs" style="left:736px;top:407px;width:404px;height:1px;background:#dfdfdf"></div>
<div class="abs" style="left:736px;top:448px;width:404px;height:1px;background:#dfdfdf"></div>
<div class="abs" style="left:736px;top:449px;width:404px;height:1px;background:#fbfbfb"></div>
<!-- title icon -->
<svg style="left:744px;top:322px" width="16" height="16" viewBox="0 0 32 32">
  <path d="M14 10 L22 7 H31 V17 L24 20 H14 Z" fill="#c9ccd2" stroke="#8e9198" stroke-width="1"/>
  <rect x="24.5" y="12" width="4" height="4" fill="#3fae3f"/>
  <path d="M4.5 11 V7 A5.5 5.5 0 0 1 15.5 7 V11" fill="none" stroke="#c79a30" stroke-width="3.4"/>
  <rect x="1" y="10" width="18" height="13" rx="1.6" fill="url(#ggold)" stroke="#8e6a1a" stroke-width="1"/>
  <path d="M19 17 L30 29 L27 31 L23.6 27 L21.6 28 L19.6 25.6 L21.4 24.4 L15.6 19 Z" fill="#c49a32" stroke="#8e6a1a" stroke-width=".8"/>
  <circle cx="12.5" cy="19.5" r="4.2" fill="#e4e4e6" stroke="#6e7278" stroke-width="1.2"/>
  <path d="M11 23 H14.4 V31 H11 Z" fill="#d8d8dc" stroke="#6e7278" stroke-width="1"/>
</svg>
<!-- caption buttons -->
<svg style="left:1021px;top:325px" width="102" height="11" viewBox="0 0 102 11" fill="none" stroke-width="1.15"><path d="M0 5.6 H10" stroke="#111"/><rect x="45.5" y="0.5" width="9.4" height="9.4" rx="1.2" stroke="#c4c4c4" stroke-width="1"/><path d="M91 0.3 L101 10.3 M101 0.3 L91 10.3" stroke="#111"/></svg>
<!-- big icon -->
<svg style="left:746px;top:356px" width="32" height="32" viewBox="0 0 32 32"><use href="#icbl"/></svg>
<!-- buttons -->
<div class="abs" style="left:769px;top:417px;width:176px;height:21px;background:#fdfdfd;border:1.6px solid #0a6cc8;border-radius:4.5px"></div>
<div class="abs" style="left:953px;top:417px;width:176px;height:21px;background:#fdfdfd;border:1px solid #d2d2d2;border-bottom-color:#c2c2c2;border-radius:4.5px"></div>
<!-- badge -->
<div class="abs" style="left:927.5px;top:408.5px;width:23.5px;height:23.5px;border-radius:50%;background:#f94444;box-shadow:0 1.5px 3px rgba(0,0,0,.38)"></div>
<!-- link underline -->
<div class="abs" style="left:746px;top:472px;width:80px;height:1px;background:#0a64c8"></div>

<span class="t" id="t25" style="left:766.40px;top:325.00px;font-size:12px;color:#000;letter-spacing:-0.054px;word-spacing:0.054px;">Chiffrement de lecteur BitLocker</span>
<span class="t" id="t26" style="left:788.80px;top:359.70px;font-size:16px;color:#003399;letter-spacing:-0.040px;word-spacing:0.040px;">L’ordinateur doit être redémarré</span>
<span class="t" id="t27" style="left:794.30px;top:422.00px;font-size:12px;color:#000;letter-spacing:-0.128px;word-spacing:0.128px;">Redémarrer maintenant</span>
<span class="t" id="t28" style="left:970.00px;top:421.80px;font-size:12px;color:#000;letter-spacing:-0.094px;word-spacing:0.094px;">Redémarrer ultérieurement</span>
<span class="t" id="t29" style="left:935.10px;top:413.30px;font-size:17px;color:#fff;letter-spacing:0.000px;word-spacing:0.000px;font-weight:bold;transform:scaleX(.82);transform-origin:left;text-shadow:0 1px 1px rgba(120,0,0,.35)">1</span>
<span class="t" id="t30" style="left:746.40px;top:460.70px;font-size:12px;color:#0a64c8;letter-spacing:-0.341px;word-spacing:0.341px;">Gérer BitLocker</span>
<div id="taskbar" class="abs"></div>
<!-- weather -->
<svg style="left:455px;top:807px" width="24" height="22" viewBox="0 0 24 22">
  <defs><linearGradient id="gwe" x1="0" y1="0" x2="0" y2="1"><stop offset="0" stop-color="#b6bac0"/><stop offset="1" stop-color="#74787e"/></linearGradient></defs>
  <circle cx="10.7" cy="10.9" r="10.6" fill="url(#gwe)"/>
  <path d="M12.4 18.4 A2.9 2.9 0 0 1 12 12.7 A4 4 0 0 1 19.4 11.6 A3.4 3.4 0 0 1 20.4 18.4 Z" fill="#eceef2"/>
</svg>
<!-- start -->
<svg style="left:713px;top:807px" width="23" height="23" viewBox="0 0 23 23">
  <defs><linearGradient id="gwin" x1="0" y1="0" x2="1" y2="1"><stop offset="0" stop-color="#50c8ff"/><stop offset=".5" stop-color="#1a96e6"/><stop offset="1" stop-color="#0072d0"/></linearGradient></defs>
  <path d="M0 1 A1 1 0 0 1 1 0 H11 V11 H0 Z M12 0 H22 A1 1 0 0 1 23 1 V11 H12 Z M0 12 H11 V23 H1 A1 1 0 0 1 0 22 Z M12 12 H23 V22 A1 1 0 0 1 22 23 H12 Z" fill="url(#gwin)"/>
</svg>
<!-- search pill -->
<div class="abs" style="left:750px;top:802px;width:218px;height:32px;background:#fbfbfb;border:1px solid #d6d6d6;border-bottom-color:#c8c8c8;border-radius:16px"></div>
<svg style="left:760.5px;top:811px" width="15" height="15" viewBox="0 0 15 15" fill="none" stroke="#1c1c1c" stroke-width="1.7" stroke-linecap="round"><circle cx="6.2" cy="6.2" r="5.3"/><path d="M10.2 10.2 L14 14"/></svg>
<!-- task view -->
<svg style="left:981px;top:806px" width="25" height="24" viewBox="0 0 25 24">
  <defs><linearGradient id="gtv1" x1="0" y1="0" x2="0" y2="1"><stop offset="0" stop-color="#3c3c3c"/><stop offset="1" stop-color="#141414"/></linearGradient>
  <linearGradient id="gtv2" x1="1" y1="0" x2="0" y2="1"><stop offset="0" stop-color="#ffffff"/><stop offset="1" stop-color="#b8b8b8"/></linearGradient></defs>
  <rect x="0" y="6.6" width="18" height="16.6" rx="1" fill="url(#gtv1)"/>
  <rect x="6.4" y="0.4" width="17.8" height="16" rx="1" fill="url(#gtv2)" opacity=".93"/>
</svg>
<!-- explorer -->
<svg style="left:1025px;top:806.5px" width="24" height="22" viewBox="0 0 24 22">
  <defs><linearGradient id="gfo" x1="0" y1="0" x2="0" y2="1"><stop offset="0" stop-color="#ffdc6a"/><stop offset="1" stop-color="#f6b92e"/></linearGradient></defs>
  <path d="M0 2 A1.6 1.6 0 0 1 1.6 0.4 H7 L9.6 2.8 H22.400 A1.600 1.600 0 0 1 24 4.400 V8 H0 Z" fill="#e8a51c"/>
  <path d="M0 5.600 H9 L11 3.600 H22.400 A1.600 1.600 0 0 1 24 5.200 V20 A1.600 1.600 0 0 1 22.400 21.600 H1.600 A1.600 1.600 0 0 1 0 20 Z" fill="url(#gfo)"/>
  <path d="M4 21.600 V17.400 A2.400 2.400 0 0 1 6.400 15 H17.600 A2.400 2.400 0 0 1 20 17.400 V21.600 Z" fill="#1c86de"/>
  <rect x="4" y="20" width="16" height="1.600" fill="#1466b8"/>
</svg>
<div class="abs" style="left:1034px;top:834px;width:6px;height:3px;border-radius:1.5px;background:#8c8c8c"></div>
<!-- edge -->
<svg style="left:1069px;top:806px" width="24" height="24" viewBox="0 0 256 256"><use href="#edgelogo"/></svg>
<!-- store -->
<svg style="left:1113px;top:806px" width="24" height="24" viewBox="0 0 24 24">
  <defs><linearGradient id="gst" x1="0" y1="0" x2="0" y2="1"><stop offset="0" stop-color="#1c72c8"/><stop offset="1" stop-color="#134488"/></linearGradient></defs>
  <path d="M7 6 V3.400 A2 2 0 0 1 9 1.400 H15 A2 2 0 0 1 17 3.400 V6" fill="none" stroke="#3aa4ec" stroke-width="1.700"/>
  <path d="M0.400 5.400 H23.600 V20.600 A3 3 0 0 1 20.600 23.600 H3.400 A3 3 0 0 1 0.400 20.600 Z" fill="url(#gst)"/>
  <rect x="7" y="9.400" width="4.400" height="4.400" fill="#f25022"/><rect x="12.400" y="9.400" width="4.400" height="4.400" fill="#7fba00"/><rect x="7" y="14.800" width="4.400" height="4.400" fill="#00a4ef"/><rect x="12.400" y="14.800" width="4.400" height="4.400" fill="#ffb900"/>
</svg>
<!-- bitlocker active -->
<div class="abs" style="left:1149px;top:798px;width:40px;height:40px;background:#edc7c3;border-radius:4px"></div>
<div class="abs" style="left:1153px;top:834px;width:32px;height:3px;border-radius:1.5px;background:#c42b1c"></div>
<svg style="left:1156.500px;top:806px" width="25" height="25" viewBox="0 0 32 32"><use href="#icbl"/></svg>
<!-- tray -->
<svg style="left:1266.500px;top:815px" width="11" height="7" viewBox="0 0 11 7" fill="none" stroke="#1a1a1a" stroke-width="1.500" stroke-linecap="round" stroke-linejoin="round"><path d="M0.800 5.800 L5.400 1 L10 5.800"/></svg>
<svg style="left:1296px;top:810px" width="16" height="16" viewBox="0 0 16 16" fill="none" stroke="#1a1a1a" stroke-width="1.35"><path d="M10.200 1.500 H2.500 A1.700 1.700 0 0 0 0.800 3.200 V10.500 A1.700 1.700 0 0 0 2.500 12.200 H11.400"/><path d="M4.800 12.400 V15 M10.500 12.400 V15 M3 15.300 H12.200"/><rect x="11.800" y="0.700" width="3.700" height="5.200" rx="1.200"/><path d="M13.650 6 V16"/></svg>
<svg style="left:1322px;top:812px" width="15" height="14" viewBox="0 0 15 14"><path d="M7 5 V0.700 L3.400 3.300 H0.700 V7.900 H3.400 L5 9.100" fill="none" stroke="#1a1a1a" stroke-width="1.350" stroke-linejoin="round"/><circle cx="9.700" cy="9.400" r="4.450" fill="#1a1a1a"/><path d="M8 7.700 L11.400 11.100 M11.400 7.700 L8 11.100" stroke="#f2f2f2" stroke-width="1.350"/></svg>
<svg style="left:1423px;top:810px" width="15" height="16" viewBox="0 0 15 16"><path d="M7.100 0.900 C4.200 0.900 2.700 3 2.700 5.600 V8.600 L0.500 11.500 V12.700 H13.700 V11.500 L11.500 8.600 V5.600 C11.500 3 10 0.900 7.100 0.900 Z" fill="#1a1a1a"/><path d="M5 13.700 H9.200 A2.100 2.100 0 0 1 5 13.700 Z" fill="#1a1a1a"/><path d="M10 1.300 H13.800 L10 5.400 H14" fill="none" stroke="#eeeeee" stroke-width="2.300"/><path d="M4.900 5 H8.300 L4.900 8.800 H8.500" fill="none" stroke="#f2f2f2" stroke-width="1.200"/><path d="M10.300 1.300 H13.700 L10.300 5.300 H13.900" fill="none" stroke="#1a1a1a" stroke-width="1.300"/></svg>

<span class="t" id="t31" style="left:786.60px;top:812.00px;font-size:13.59px;color:#5c5c5c;letter-spacing:-0.310px;word-spacing:0.310px;">Rechercher</span>
</div></div>
</body>
</html>
